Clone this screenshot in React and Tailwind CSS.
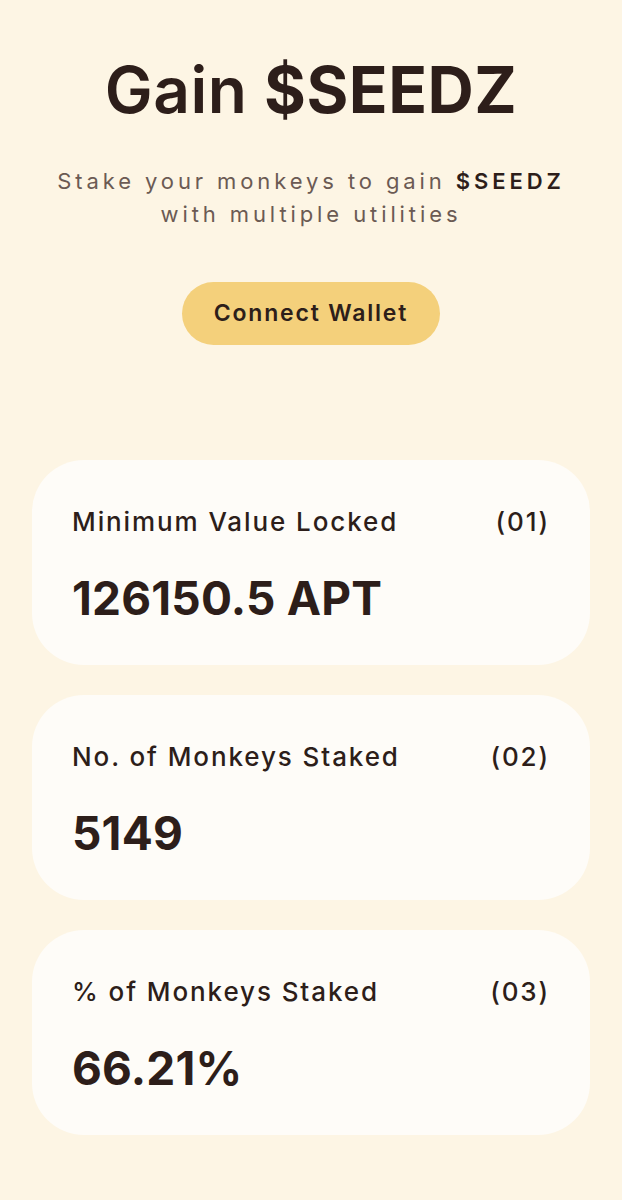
export default function App() {
  const stats = [
    { label: "Minimum Value Locked", idx: "(01)", value: "126150.5 APT" },
    { label: "No. of Monkeys Staked", idx: "(02)", value: "5149" },
    { label: "% of Monkeys Staked", idx: "(03)", value: "66.21%" },
  ];

  return (
    <div
      className="min-h-[1200px] w-full bg-[#fdf5e4] text-[#2d1e1a]"
      style={{ fontFamily: "Inter, 'Noto Sans', sans-serif" }}
    >
      {/* Hero */}
      <section className="flex flex-col items-center pt-[52px] text-center">
        <h1 className="text-[64px] font-semibold leading-[76px] tracking-[0.5px]">
          Gain <span className="font-bold">$SEEDZ</span>
        </h1>
        <p className="mt-[37px] text-[22px] leading-[33px] tracking-[3.9px] text-[#6b5a53]">
          Stake your monkeys to gain{" "}
          <span className="font-semibold text-[#2d1e1a]">$SEEDZ</span>
          <br />
          with multiple utilities
        </p>
        <button className="mt-[51px] h-[63px] w-[258px] rounded-full bg-[#f4d07b] text-[23px] font-semibold tracking-[1.8px] text-[#2d1e1a]">
          Connect Wallet
        </button>
      </section>

      {/* Stats */}
      <section className="mt-[115px] flex flex-col gap-[30px] px-[32px] pb-[63px]">
        {stats.map((s) => (
          <div
            key={s.idx}
            className="flex h-[205px] flex-col rounded-[52px] bg-[#fefcf8] px-[40px] pt-[46px]"
          >
            <div className="flex items-center justify-between text-[26px] font-medium leading-[32px] tracking-[1.9px]">
              <span>{s.label}</span>
              <span>{s.idx}</span>
            </div>
            <div className="mt-[34px] text-[46px] font-bold leading-[52px] tracking-[0.2px]">
              {s.value}
            </div>
          </div>
        ))}
      </section>
    </div>
  );
}
